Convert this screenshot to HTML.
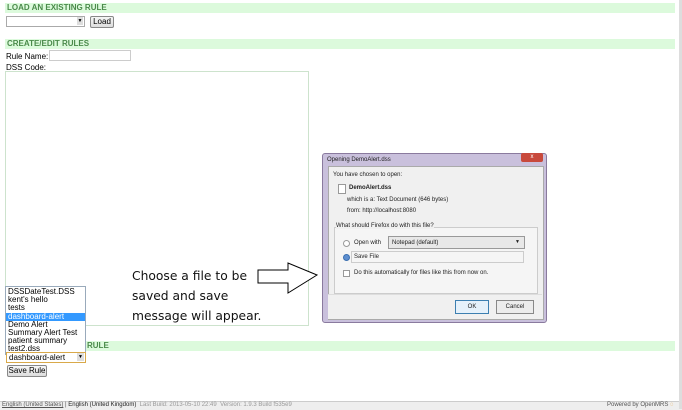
<!DOCTYPE html>
<html><head><style>
body{margin:0;width:682px;height:409px;position:relative;background:#fff;font-family:"Liberation Sans",sans-serif;font-size:8px;overflow:hidden;color:#000}
.a{position:absolute;white-space:nowrap}
.hdr{position:absolute;left:5px;width:670px;height:10px;background:#dcfadc;color:#4a8a4a;font-weight:bold;font-size:8px;line-height:10px;padding-left:2px;box-sizing:border-box}
.btn{position:absolute;border:1px solid #888;background:linear-gradient(#f6f6f6,#ddd);border-radius:2px;font-size:8px;text-align:center;white-space:nowrap}
.dl{font-family:"Liberation Sans",sans-serif;font-size:6px;color:#222}
</style></head><body>
<div class="hdr" style="top:3px">LOAD AN EXISTING RULE</div>
<div class="a" style="left:6px;top:16px;width:77px;height:9px;border:1px solid #aaa"></div>
<div class="a" style="left:77px;top:17px;width:6px;height:8px;background:#ddd;font-size:5px;text-align:center;line-height:8px">▼</div>
<div class="btn" style="left:90px;top:16px;width:22px;height:10px;line-height:10px">Load</div>
<div class="hdr" style="top:39px">CREATE/EDIT RULES</div>
<div class="a" style="left:6px;top:52px">Rule Name:</div>
<div class="a" style="left:49px;top:50px;width:80px;height:9px;border:1px solid #ccc"></div>
<div class="a" style="left:6px;top:63px">DSS Code:</div>
<div class="a" style="left:5px;top:71px;width:302px;height:253px;border:1px solid #cde3cd"></div>
<div class="hdr" style="top:341px"><span style="margin-left:80px">RULE</span></div>
<div class="a" style="left:5px;top:286px;width:79px;height:66px;border:1px solid #9ab;background:#fff;font-size:8px;line-height:8.2px;padding-top:1px">
<div style="padding-left:2px">DSSDateTest.DSS</div><div style="padding-left:2px">kent's hello</div><div style="padding-left:2px">tests</div><div style="padding-left:2px;background:#3399ff;color:#fff">dashboard-alert</div><div style="padding-left:2px">Demo Alert</div><div style="padding-left:2px">Summary Alert Test</div><div style="padding-left:2px">patient summary</div><div style="padding-left:2px">test2.dss</div></div>
<div class="a" style="left:6px;top:352px;width:76px;height:9px;border:1px solid #d9a94a;line-height:9px;padding-left:2px;background:#fff">dashboard-alert</div>
<div class="a" style="left:77px;top:353px;width:7px;height:8px;background:#ddd;font-size:5px;text-align:center;line-height:8px">▼</div>
<div class="btn" style="left:7px;top:365px;width:38px;height:10px;line-height:10px">Save Rule</div>
<div class="a" style="left:132px;top:266px;font-family:'DejaVu Sans',sans-serif;font-size:12.3px;line-height:20px;color:#111">Choose a file to be<br>saved and save<br>message will appear.</div>
<svg class="a" style="left:255px;top:260px" width="70" height="36"><polygon points="3,10 33,10 33,3 62,15 33,33 33,23 3,23" fill="#fff" stroke="#000" stroke-width="1"/></svg>
<div class="a" style="left:322px;top:153px;width:225px;height:170px;background:#c9c0dc;border:1px solid #8a7a9e;box-sizing:border-box;border-radius:3px"></div>
<div class="a dl" style="left:327px;top:157px">Opening DemoAlert.dss</div>
<div class="a" style="left:521px;top:153px;width:22px;height:9px;background:#c8493c;border-radius:2px;color:#fff;font-size:6px;text-align:center;line-height:9px">x</div>
<div class="a" style="left:328px;top:166px;width:214px;height:152px;background:#f0f0f0;border:1px solid #aaa"></div>
<div class="a dl" style="left:333px;top:172px">You have chosen to open:</div>
<div class="a" style="left:338px;top:184px;width:6px;height:8px;border:1px solid #999;background:#fff"></div>
<div class="a dl" style="left:349px;top:185px;font-weight:bold">DemoAlert.dss</div>
<div class="a dl" style="left:347px;top:197px">which is a:  Text Document (646 bytes)</div>
<div class="a dl" style="left:347px;top:208px">from:  http://localhost:8080</div>
<div class="a" style="left:334px;top:227px;width:202px;height:65px;border:1px solid #ccc;background:#f5f5f5"></div>
<div class="a dl" style="left:336px;top:223px;background:#f0f0f0">What should Firefox do with this file?</div>
<div class="a" style="left:343px;top:240px;width:5px;height:5px;border:1px solid #999;border-radius:50%;background:#fff"></div>
<div class="a dl" style="left:354px;top:240px">Open with</div>
<div class="a" style="left:388px;top:236px;width:135px;height:11px;border:1px solid #999;background:#e8e8e8"></div>
<div class="a dl" style="left:392px;top:240px">Notepad (default)</div>
<div class="a dl" style="left:515px;top:239px;font-size:5px">▼</div>
<div class="a" style="left:343px;top:254px;width:5px;height:5px;border:1px solid #3b6fb0;border-radius:50%;background:#5e8fd0"></div>
<div class="a" style="left:351px;top:251px;width:171px;height:10px;border:1px solid #ccc"></div>
<div class="a dl" style="left:354px;top:254px">Save File</div>
<div class="a" style="left:343px;top:270px;width:5px;height:5px;border:1px solid #999;background:#fff"></div>
<div class="a dl" style="left:354px;top:270px">Do this automatically for files like this from now on.</div>
<div class="a" style="left:328px;top:294px;width:214px;height:24px;background:#f0f0f0;border-top:1px solid #ddd"></div>
<div class="a dl" style="left:455px;top:300px;width:32px;height:12px;border:1px solid #3c7fb1;background:#e5f1fb;text-align:center;line-height:12px">OK</div>
<div class="a dl" style="left:496px;top:300px;width:36px;height:12px;border:1px solid #888;background:#ececec;text-align:center;line-height:12px">Cancel</div>
<div class="a" style="left:0;top:401px;width:682px;height:8px;background:#eee;border-top:1px solid #ccc"></div>
<div class="a" style="left:2px;top:402px;font-size:6px;color:#555"><u>English (United States)</u> | <span style="color:#222">English (United Kingdom)</span> &nbsp;<span style="color:#999">Last Build: 2013-05-10 22:49 &nbsp;Version: 1.9.3 Build f535e9</span></div>
<div class="a" style="left:607px;top:402px;font-size:6px;color:#555">Powered by OpenMRS <span style="color:#e68a00">◌</span></div>
<div class="a" style="left:679px;top:0;width:3px;height:409px;background:#ddd"></div>
</body></html>
